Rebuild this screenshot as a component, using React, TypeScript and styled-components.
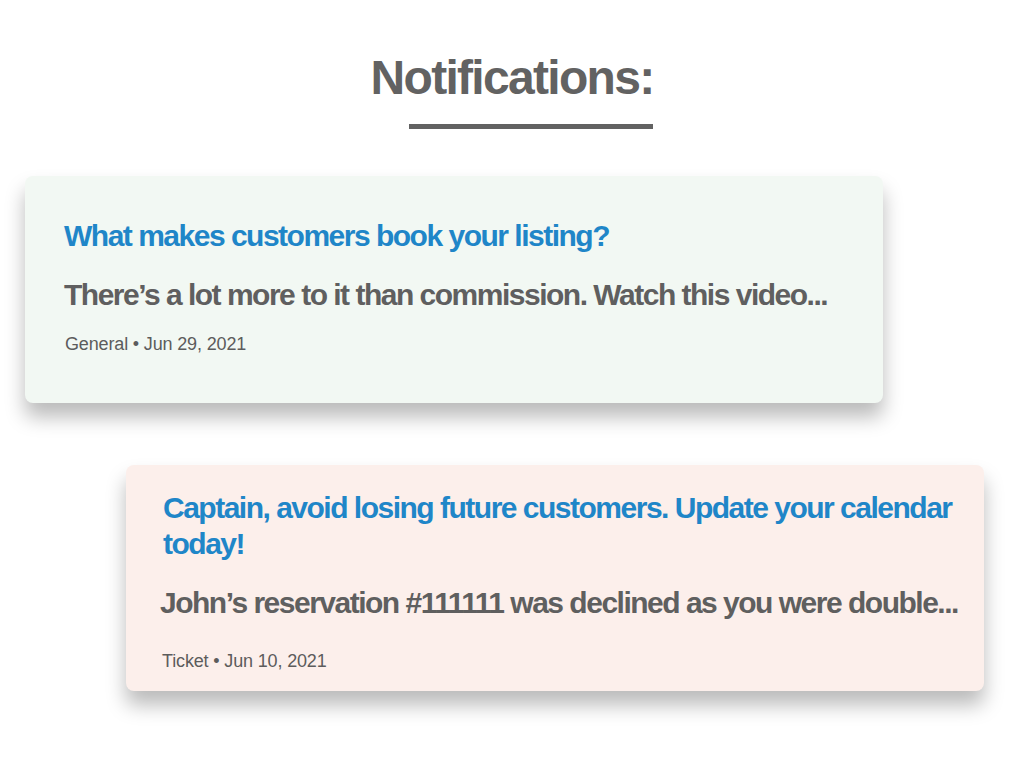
import React from "react";
import styled, { createGlobalStyle } from "styled-components";

const Global = createGlobalStyle`
  html, body { margin: 0; padding: 0; background: #ffffff; }
  body { font-family: "Liberation Sans", Arial, sans-serif; }
`;

const Page = styled.div`
  width: 1024px;
  min-height: 768px;
  display: flex;
  flex-direction: column;
  padding-top: 50px;
  box-sizing: border-box;
`;

const Header = styled.header`
  align-self: center;
  display: flex;
  flex-direction: column;
  align-items: flex-end;
  margin-bottom: 47px;
`;

const Heading = styled.h1`
  margin: 0;
  font-size: 48px;
  line-height: 56px;
  font-weight: 700;
  letter-spacing: -1.7px;
  color: #626262;
`;

const Underline = styled.div`
  width: 244px;
  height: 5px;
  margin-top: 18px;
  background: #626262;
`;

const List = styled.div`
  display: flex;
  flex-direction: column;
  gap: 62px;
`;

type Tone = "green" | "red";

const Card = styled.article<{ $tone: Tone; $offset: number; $pt: number; $pb: number; $pl: number }>`
  width: 858px;
  box-sizing: border-box;
  margin-left: ${(p) => p.$offset}px;
  padding: ${(p) => p.$pt}px 30px ${(p) => p.$pb}px ${(p) => p.$pl}px;
  border-radius: 8px;
  background: ${(p) => (p.$tone === "green" ? "#f2f8f3" : "#fcefeb")};
  box-shadow: 0 14px 20px rgba(0, 0, 0, 0.27);
  display: flex;
  flex-direction: column;
`;

const Title = styled.h2`
  margin: 0;
  font-size: 30px;
  line-height: 36px;
  font-weight: 700;
  letter-spacing: -1.5px;
  color: #1f86c8;
`;

const Body = styled.p<{ $shift: number }>`
  margin: 23px 0 0 ${(p) => p.$shift}px;
  font-size: 30px;
  line-height: 36px;
  font-weight: 700;
  letter-spacing: -1.5px;
  color: #5f5f5f;
  white-space: nowrap;
`;

const Meta = styled.div<{ $gap: number; $shift: number }>`
  margin: ${(p) => p.$gap}px 0 0 ${(p) => p.$shift}px;
  font-size: 18px;
  line-height: 24px;
  letter-spacing: -0.15px;
  color: #5c5c5c;
`;

const items = [
  {
    tone: "green" as Tone,
    offset: 25,
    pt: 42,
    pb: 47,
    pl: 39,
    bodyShift: 0,
    metaShift: 1,
    metaGap: 19,
    title: "What makes customers book your listing?",
    body: "There’s a lot more to it than commission. Watch this video...",
    meta: "General • Jun 29, 2021",
  },
  {
    tone: "red" as Tone,
    offset: 126,
    pt: 25,
    pb: 18,
    pl: 37,
    bodyShift: -3,
    metaShift: -1,
    metaGap: 28,
    title: "Captain, avoid losing future customers. Update your calendar today!",
    body: "John’s reservation #111111 was declined as you were double...",
    meta: "Ticket • Jun 10, 2021",
  },
];

export default function App() {
  return (
    <>
      <Global />
      <Page>
        <Header>
          <Heading>Notifications:</Heading>
          <Underline />
        </Header>
        <List>
          {items.map((it) => (
            <Card key={it.title} $tone={it.tone} $offset={it.offset} $pt={it.pt} $pb={it.pb} $pl={it.pl}>
              <Title>{it.title}</Title>
              <Body $shift={it.bodyShift}>{it.body}</Body>
              <Meta $gap={it.metaGap} $shift={it.metaShift}>{it.meta}</Meta>
            </Card>
          ))}
        </List>
      </Page>
    </>
  );
}
